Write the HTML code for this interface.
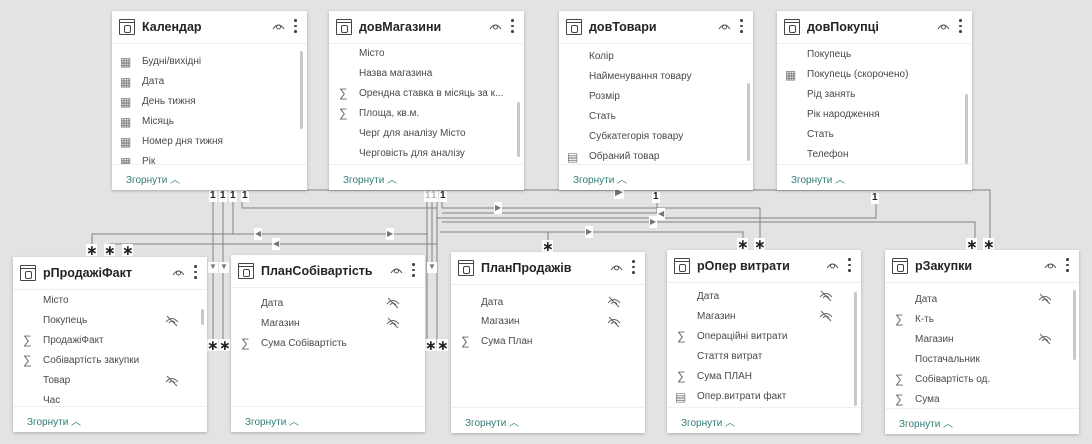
<!DOCTYPE html>
<html><head><meta charset="utf-8">
<style>
*{margin:0;padding:0;box-sizing:border-box}
body{width:1092px;height:444px;background:#e3e3e3;position:relative;overflow:hidden;font-family:"Liberation Sans","DejaVu Sans",sans-serif;color:#333}
.card{position:absolute;background:#fff;box-shadow:0 1px 3px rgba(0,0,0,.25);overflow:hidden}
.hd{position:absolute;left:0;right:0;top:0;height:33px;border-bottom:1px solid #eee}
.ti{position:absolute;left:7px;top:8px;width:16px;height:16px;border:1.3px solid #444;border-radius:1px}
.ti:before{content:"";position:absolute;left:0;right:0;top:2px;border-top:1.3px solid #444}
.ti:after{content:"";position:absolute;left:4px;top:5px;width:5px;height:6px;border:1.2px solid #444;border-radius:2px}
.tt{position:absolute;left:30px;top:9px;font-size:12.5px;font-weight:bold;color:#252423}
.eye{position:absolute;right:22px;top:11px}
.dots{position:absolute;right:10px;top:8px;width:3px}
.dots i{display:block;width:2.5px;height:2.5px;background:#444;border-radius:50%;margin-bottom:3px}
.r{position:absolute;left:30px;font-size:10px;color:#4a4a4a;height:14px;line-height:14px;white-space:nowrap}
.ic{position:absolute;left:-22px;top:0;font-size:12px;color:#777}
.sg{position:absolute;left:-20px;top:-1px;font-size:12px;color:#666}
.he{position:absolute}
.ft{position:absolute;left:0;right:0;bottom:0;height:26px;border-top:1px solid #f0f0f0;background:#fff}
.ft span{position:absolute;left:14px;top:6px;font-size:10px;color:#2e7d74}
.sb{position:absolute;width:3px;background:#c8c8c8;border-radius:2px}
.lb{position:absolute;background:#fff;font-size:10px;font-weight:bold;color:#222;text-align:center;line-height:10px;height:11px;padding:0 1px}
.st{position:absolute;background:#fff;font-size:14px;font-weight:bold;color:#222;text-align:center;line-height:13px;height:12px;width:11px;overflow:hidden}
</style></head><body>
<svg width="1092" height="444" style="position:absolute;left:0;top:0" fill="none" stroke="#808080" stroke-width="1">
<path d="M247 190 H990 V243"/>
<path d="M213 196 V266 M223 196 V266 M213 272 V343 M223 272 V343"/>
<path d="M233 196 V234 H92 V249 M233 234 H427"/>
<path d="M110 249 V244 H128 V249 M128 244 H437"/>
<path d="M242 196 V208 H437"/>
<path d="M427 196 V343 M432 196 V266 M437 196 V343"/>
<path d="M442 196 V208 H760 V244"/>
<path d="M442 213 H657 V198"/>
<path d="M437 218 H876 V198"/>
<path d="M442 222 H975 V244"/>
<path d="M440 232 H743 V244 M548 232 V244"/>
<path d="M620 190 V196"/>
</svg>
<div class="lb" style="left:209px;top:191px">1</div><div class="lb" style="left:219px;top:191px">1</div><div class="lb" style="left:229px;top:191px">1</div><div class="lb" style="left:241px;top:191px">1</div>
<div class="lb" style="left:424px;top:191px;color:#bbb">1</div><div class="lb" style="left:430px;top:191px;color:#bbb">1</div><div class="lb" style="left:439px;top:191px">1</div>
<div class="lb" style="left:652px;top:192px">1</div><div class="lb" style="left:871px;top:193px">1</div>
<div class="lb" style="left:614px;top:188px;color:#777">▶</div>
<div class="st" style="left:86px;top:244px">∗</div><div class="st" style="left:104px;top:244px">∗</div><div class="st" style="left:122px;top:244px">∗</div>
<div class="st" style="left:207px;top:339px">∗</div><div class="st" style="left:219px;top:339px">∗</div>
<div class="st" style="left:425px;top:339px">∗</div><div class="st" style="left:437px;top:339px">∗</div>
<div class="st" style="left:542px;top:240px">∗</div>
<div class="st" style="left:737px;top:238px">∗</div><div class="st" style="left:754px;top:238px">∗</div>
<div class="st" style="left:966px;top:238px">∗</div><div class="st" style="left:983px;top:238px">∗</div>
<div class="lb" style="left:208px;top:262px;color:#777;font-size:8px">▼</div><div class="lb" style="left:219px;top:262px;color:#777;font-size:8px">▼</div><div class="lb" style="left:427px;top:262px;color:#777;font-size:8px">▼</div>
<div class="lb" style="left:254px;top:228px;color:#777;font-size:8px;height:12px;line-height:12px">◀</div>
<div class="lb" style="left:272px;top:238px;color:#777;font-size:8px;height:12px;line-height:12px">◀</div>
<div class="lb" style="left:386px;top:228px;color:#777;font-size:8px;height:12px;line-height:12px">▶</div>
<div class="lb" style="left:494px;top:202px;color:#777;font-size:8px;height:12px;line-height:12px">▶</div>
<div class="lb" style="left:657px;top:208px;color:#777;font-size:8px;height:12px;line-height:12px">◀</div>
<div class="lb" style="left:585px;top:226px;color:#777;font-size:8px;height:12px;line-height:12px">▶</div>
<div class="lb" style="left:649px;top:216px;color:#777;font-size:8px;height:12px;line-height:12px">▶</div>

<div class="card" style="left:112px;top:11px;width:195px;height:179px">
<div class="hd"><div class="ti"></div><div class="tt">Календар</div>
<svg class="eye" width="13" height="8" viewBox="0 0 13 8"><path d="M1 7 Q6.5 -1 12 7" stroke="#555" fill="none"/><circle cx="6.5" cy="5" r="2" stroke="#555" fill="none"/></svg>
<div class="dots"><i></i><i></i><i></i></div></div>
<div class="r" style="top:44px"><span class="ic">▦</span>Будні/вихідні</div>
<div class="r" style="top:64px"><span class="ic">▦</span>Дата</div>
<div class="r" style="top:84px"><span class="ic">▦</span>День тижня</div>
<div class="r" style="top:104px"><span class="ic">▦</span>Місяць</div>
<div class="r" style="top:124px"><span class="ic">▦</span>Номер дня тижня</div>
<div class="r" style="top:144px"><span class="ic">▦</span>Рік</div>
<div class="sb" style="left:188px;top:40px;height:78px"></div>
<div class="ft"><span>Згорнути ︿</span></div></div>

<div class="card" style="left:329px;top:11px;width:195px;height:179px">
<div class="hd"><div class="ti"></div><div class="tt">довМагазини</div>
<svg class="eye" width="13" height="8" viewBox="0 0 13 8"><path d="M1 7 Q6.5 -1 12 7" stroke="#555" fill="none"/><circle cx="6.5" cy="5" r="2" stroke="#555" fill="none"/></svg>
<div class="dots"><i></i><i></i><i></i></div></div>
<div class="r" style="top:36px">Місто</div>
<div class="r" style="top:56px">Назва магазина</div>
<div class="r" style="top:76px"><span class="sg">∑</span>Орендна ставка в місяць за к...</div>
<div class="r" style="top:96px"><span class="sg">∑</span>Площа, кв.м.</div>
<div class="r" style="top:116px">Черг для аналізу Місто</div>
<div class="r" style="top:136px">Черговість для аналізу</div>
<div class="sb" style="left:188px;top:91px;height:55px"></div>
<div class="ft"><span>Згорнути ︿</span></div></div>

<div class="card" style="left:559px;top:11px;width:194px;height:179px">
<div class="hd"><div class="ti"></div><div class="tt">довТовари</div>
<svg class="eye" width="13" height="8" viewBox="0 0 13 8"><path d="M1 7 Q6.5 -1 12 7" stroke="#555" fill="none"/><circle cx="6.5" cy="5" r="2" stroke="#555" fill="none"/></svg>
<div class="dots"><i></i><i></i><i></i></div></div>
<div class="r" style="top:39px">Колір</div>
<div class="r" style="top:59px">Найменування товару</div>
<div class="r" style="top:79px">Розмір</div>
<div class="r" style="top:99px">Стать</div>
<div class="r" style="top:119px">Субкатегорія товару</div>
<div class="r" style="top:139px"><span class="ic">▤</span>Обраний товар</div>
<div class="sb" style="left:188px;top:72px;height:78px"></div>
<div class="ft"><span>Згорнути ︿</span></div></div>

<div class="card" style="left:777px;top:11px;width:195px;height:179px">
<div class="hd"><div class="ti"></div><div class="tt">довПокупці</div>
<svg class="eye" width="13" height="8" viewBox="0 0 13 8"><path d="M1 7 Q6.5 -1 12 7" stroke="#555" fill="none"/><circle cx="6.5" cy="5" r="2" stroke="#555" fill="none"/></svg>
<div class="dots"><i></i><i></i><i></i></div></div>
<div class="r" style="top:37px">Покупець</div>
<div class="r" style="top:57px"><span class="ic">▦</span>Покупець (скорочено)</div>
<div class="r" style="top:77px">Рід занять</div>
<div class="r" style="top:97px">Рік народження</div>
<div class="r" style="top:117px">Стать</div>
<div class="r" style="top:137px">Телефон</div>
<div class="sb" style="left:188px;top:83px;height:70px"></div>
<div class="ft"><span>Згорнути ︿</span></div></div>

<div class="card" style="left:13px;top:257px;width:194px;height:175px">
<div class="hd"><div class="ti"></div><div class="tt">рПродажіФакт</div>
<svg class="eye" width="13" height="8" viewBox="0 0 13 8"><path d="M1 7 Q6.5 -1 12 7" stroke="#555" fill="none"/><circle cx="6.5" cy="5" r="2" stroke="#555" fill="none"/></svg>
<div class="dots"><i></i><i></i><i></i></div></div>
<div class="r" style="top:37px">Місто</div>
<div class="r" style="top:57px">Покупець</div>
<div class="r" style="top:77px"><span class="sg">∑</span>ПродажіФакт</div>
<div class="r" style="top:97px"><span class="sg">∑</span>Собівартість закупки</div>
<div class="r" style="top:117px">Товар</div>
<div class="r" style="top:137px">Час</div>
<svg class="he" style="left:152px;top:58px" width="14" height="12" viewBox="0 0 14 12"><path d="M1 7 Q7 0 13 7 M4 8 Q7 4 10 8 M2 1 L12 11" stroke="#666" fill="none"/></svg>
<svg class="he" style="left:152px;top:118px" width="14" height="12" viewBox="0 0 14 12"><path d="M1 7 Q7 0 13 7 M4 8 Q7 4 10 8 M2 1 L12 11" stroke="#666" fill="none"/></svg>
<div class="sb" style="left:188px;top:52px;height:16px"></div>
<div class="ft"><span>Згорнути ︿</span></div></div>

<div class="card" style="left:231px;top:255px;width:194px;height:177px">
<div class="hd"><div class="ti"></div><div class="tt">ПланСобівартість</div>
<svg class="eye" width="13" height="8" viewBox="0 0 13 8"><path d="M1 7 Q6.5 -1 12 7" stroke="#555" fill="none"/><circle cx="6.5" cy="5" r="2" stroke="#555" fill="none"/></svg>
<div class="dots"><i></i><i></i><i></i></div></div>
<div class="r" style="top:42px">Дата</div>
<div class="r" style="top:62px">Магазин</div>
<div class="r" style="top:82px"><span class="sg">∑</span>Сума Собівартість</div>
<svg class="he" style="left:155px;top:42px" width="14" height="12" viewBox="0 0 14 12"><path d="M1 7 Q7 0 13 7 M4 8 Q7 4 10 8 M2 1 L12 11" stroke="#666" fill="none"/></svg>
<svg class="he" style="left:155px;top:62px" width="14" height="12" viewBox="0 0 14 12"><path d="M1 7 Q7 0 13 7 M4 8 Q7 4 10 8 M2 1 L12 11" stroke="#666" fill="none"/></svg>
<div class="ft"><span>Згорнути ︿</span></div></div>

<div class="card" style="left:451px;top:252px;width:194px;height:181px">
<div class="hd"><div class="ti"></div><div class="tt">ПланПродажів</div>
<svg class="eye" width="13" height="8" viewBox="0 0 13 8"><path d="M1 7 Q6.5 -1 12 7" stroke="#555" fill="none"/><circle cx="6.5" cy="5" r="2" stroke="#555" fill="none"/></svg>
<div class="dots"><i></i><i></i><i></i></div></div>
<div class="r" style="top:44px">Дата</div>
<div class="r" style="top:63px">Магазин</div>
<div class="r" style="top:83px"><span class="sg">∑</span>Сума План</div>
<svg class="he" style="left:156px;top:44px" width="14" height="12" viewBox="0 0 14 12"><path d="M1 7 Q7 0 13 7 M4 8 Q7 4 10 8 M2 1 L12 11" stroke="#666" fill="none"/></svg>
<svg class="he" style="left:156px;top:64px" width="14" height="12" viewBox="0 0 14 12"><path d="M1 7 Q7 0 13 7 M4 8 Q7 4 10 8 M2 1 L12 11" stroke="#666" fill="none"/></svg>
<div class="ft"><span>Згорнути ︿</span></div></div>

<div class="card" style="left:667px;top:250px;width:194px;height:183px">
<div class="hd"><div class="ti"></div><div class="tt">рОпер витрати</div>
<svg class="eye" width="13" height="8" viewBox="0 0 13 8"><path d="M1 7 Q6.5 -1 12 7" stroke="#555" fill="none"/><circle cx="6.5" cy="5" r="2" stroke="#555" fill="none"/></svg>
<div class="dots"><i></i><i></i><i></i></div></div>
<div class="r" style="top:40px">Дата</div>
<div class="r" style="top:60px">Магазин</div>
<div class="r" style="top:80px"><span class="sg">∑</span>Операційні витрати</div>
<div class="r" style="top:100px">Стаття витрат</div>
<div class="r" style="top:120px"><span class="sg">∑</span>Сума ПЛАН</div>
<div class="r" style="top:140px"><span class="ic">▤</span>Опер.витрати факт</div>
<svg class="he" style="left:152px;top:40px" width="14" height="12" viewBox="0 0 14 12"><path d="M1 7 Q7 0 13 7 M4 8 Q7 4 10 8 M2 1 L12 11" stroke="#666" fill="none"/></svg>
<svg class="he" style="left:152px;top:60px" width="14" height="12" viewBox="0 0 14 12"><path d="M1 7 Q7 0 13 7 M4 8 Q7 4 10 8 M2 1 L12 11" stroke="#666" fill="none"/></svg>
<div class="sb" style="left:187px;top:42px;height:114px"></div>
<div class="ft"><span>Згорнути ︿</span></div></div>

<div class="card" style="left:885px;top:250px;width:194px;height:184px">
<div class="hd"><div class="ti"></div><div class="tt">рЗакупки</div>
<svg class="eye" width="13" height="8" viewBox="0 0 13 8"><path d="M1 7 Q6.5 -1 12 7" stroke="#555" fill="none"/><circle cx="6.5" cy="5" r="2" stroke="#555" fill="none"/></svg>
<div class="dots"><i></i><i></i><i></i></div></div>
<div class="r" style="top:43px">Дата</div>
<div class="r" style="top:63px"><span class="sg">∑</span>К-ть</div>
<div class="r" style="top:83px">Магазин</div>
<div class="r" style="top:103px">Постачальник</div>
<div class="r" style="top:123px"><span class="sg">∑</span>Собівартість од.</div>
<div class="r" style="top:143px"><span class="sg">∑</span>Сума</div>
<svg class="he" style="left:153px;top:43px" width="14" height="12" viewBox="0 0 14 12"><path d="M1 7 Q7 0 13 7 M4 8 Q7 4 10 8 M2 1 L12 11" stroke="#666" fill="none"/></svg>
<svg class="he" style="left:153px;top:83px" width="14" height="12" viewBox="0 0 14 12"><path d="M1 7 Q7 0 13 7 M4 8 Q7 4 10 8 M2 1 L12 11" stroke="#666" fill="none"/></svg>
<div class="sb" style="left:188px;top:40px;height:70px"></div>
<div class="ft"><span>Згорнути ︿</span></div></div>
</body></html>
